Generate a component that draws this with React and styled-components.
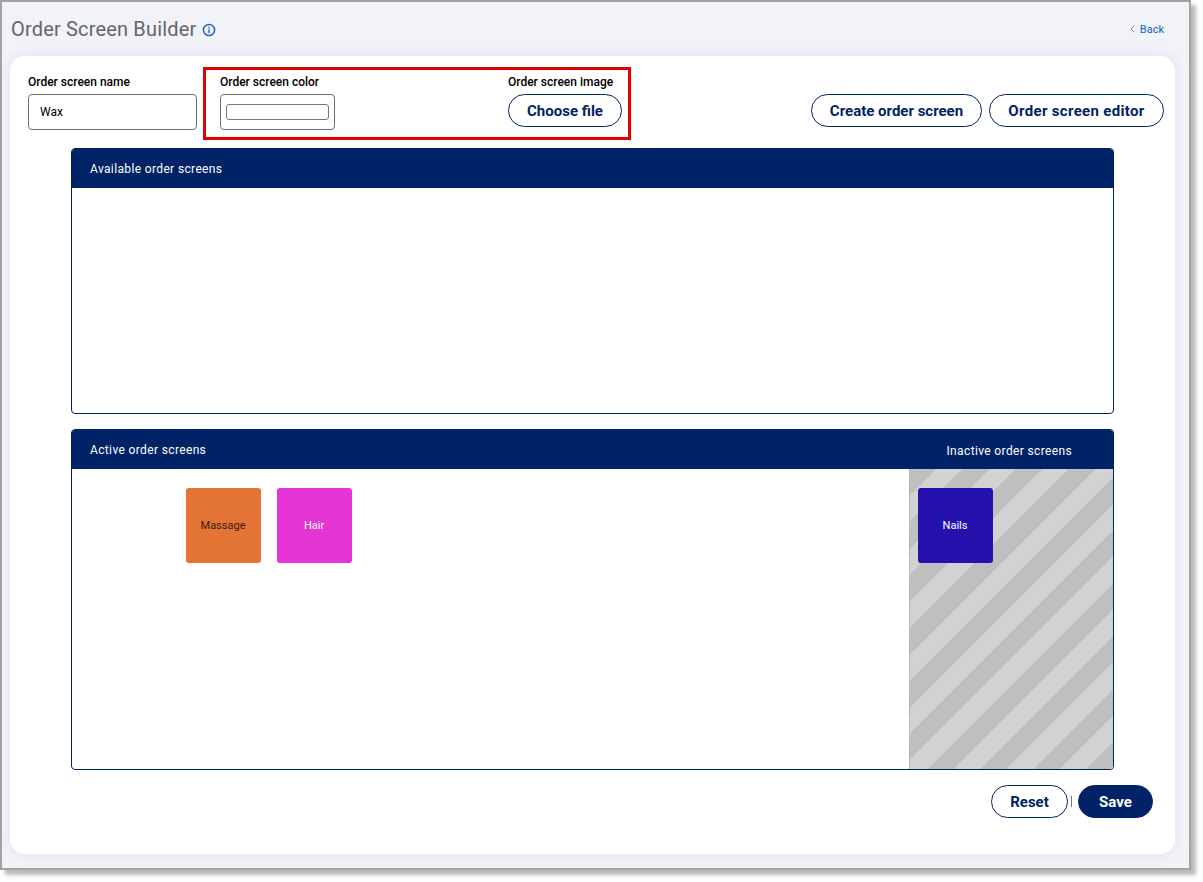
import React from "react";
import styled, { createGlobalStyle } from "styled-components";

const Global = createGlobalStyle`
  html, body { margin: 0; padding: 0; background: #fff; }
  body { font-family: Roboto, "Liberation Sans", sans-serif; color: #000; }
  #root { width: 1203px; height: 882px; overflow: hidden; }
  * { box-sizing: border-box; }
`;
const navy = "#002266";

const Frame = styled.div`
  width: 1191px;
  height: 870px;
  border: 2px solid #a3a3a3;
  background: #f1f3f8;
  box-shadow: 5px 5px 4px rgba(0,0,0,.28);
  padding: 0 14px 14px 8px;
  display: flex;
  flex-direction: column;
`;
const TopBar = styled.div`
  height: 54px;
  display: flex;
  align-items: center;
  padding: 0 11px 0 1px;
  flex: none;
`;
const Title = styled.h1`
  margin: 0;
  font-size: 20px;
  font-weight: 400;
  letter-spacing: .17px;
  color: #666;
`;
const InfoIcon = styled.svg`
  width: 14px;
  height: 14px;
  margin-left: 6px;
  margin-top: 1px;
`;
const BackLink = styled.a`
  margin-left: auto;
  display: flex;
  align-items: center;
  gap: 5px;
  font-size: 11px;
  color: #0a68c4;
`;
const Card = styled.main`
  flex: 1;
  background: #fff;
  border-radius: 15px;
  box-shadow: 0 0 14px rgba(60,70,110,.09);
  padding: 11px 11px 0 18px;
  display: flex;
  flex-direction: column;
`;
const FormRow = styled.div`
  display: flex;
  align-items: flex-start;
  height: 81px;
  flex: none;
`;
const Field = styled.div`
  display: flex;
  flex-direction: column;
  padding-top: 8px;
  width: ${p => p.$width}px;
`;
const Label = styled.label`
  font-size: 12px;
  font-weight: 500;
  line-height: 14px;
  height: 19px;
  white-space: nowrap;
`;
const TextBox = styled.div`
  height: 36px;
  border: 1px solid #6e6e6e;
  border-radius: 4px;
  padding: 0 11px;
  display: flex;
  align-items: center;
  font-size: 12px;
`;
const ColorBox = styled(TextBox)`
  padding: 0 5px;
`;
const Swatch = styled.div`
  width: 103px;
  height: 16px;
  border: 1px solid #777;
  border-radius: 3px;
  background: #fff;
`;
const Highlight = styled.div`
  width: 428px;
  height: 73px;
  margin-left: 6px;
  border: 3px solid #e00000;
  padding: 0 6px 0 14px;
  display: flex;
  justify-content: space-between;
`;
const HighlightField = styled(Field)`
  padding-top: 5px;
`;
const PillButton = styled.button`
  height: 33px;
  width: ${p => p.$width}px;
  border: 1px solid ${navy};
  border-radius: 17px;
  background: ${p => (p.$filled ? navy : "#fff")};
  color: ${p => (p.$filled ? "#fff" : navy)};
  font: 700 15px Roboto, sans-serif;
  letter-spacing: ${p => p.$spacing || 0}px;
  padding: 0;
  white-space: nowrap;
`;
const Actions = styled.div`
  margin-left: auto;
  display: flex;
  gap: 7px;
  padding-top: 27px;
`;
const Panel = styled.section`
  width: 1043px;
  height: ${p => p.$height}px;
  margin: ${p => p.$top}px 0 0 43px;
  border: 1px solid ${navy};
  border-radius: 4px;
  display: flex;
  flex-direction: column;
  overflow: hidden;
  flex: none;
`;
const PanelHeader = styled.header`
  height: 39px;
  flex: none;
  background: ${navy};
  color: #fff;
  font-size: 12px;
  font-weight: 400;
  letter-spacing: .36px;
  display: flex;
  align-items: center;
  padding: 0 41px 0 18px;
  justify-content: space-between;
`;
const InactiveTitle = styled.span`
  padding-top: 2px;
`;
const PanelBody = styled.div`
  flex: 1;
  display: flex;
  min-height: 0;
`;
const ActiveArea = styled.div`
  flex: 1;
  display: flex;
  gap: 16px;
  padding: 19px 0 0 114px;
  align-items: flex-start;
`;
const InactiveArea = styled.div`
  width: 204px;
  border-left: 1px dotted #aaa;
  padding: 19px 0 0 8px;
  background: repeating-linear-gradient(135deg, #bfbfbf 0 18.7px, #d2d2d2 18.7px 37.4px);
`;
const Tile = styled.div`
  width: 75px;
  height: 75px;
  border-radius: 3px;
  background: ${p => p.$bg};
  color: ${p => p.$fg};
  font-size: 11px;
  padding-right: 1px;
  display: flex;
  align-items: center;
  justify-content: center;
`;
const Footer = styled.div`
  display: flex;
  align-items: center;
  justify-content: flex-end;
  padding: 15px 0 0 0;
  margin-right: 11px;
`;
const Divider = styled.span`
  width: 1px;
  height: 11px;
  background: #777;
  margin: 0 6px 0 3px;
`;

export default function App() {
  return (
    <>
      <Global />
      <Frame>
        <TopBar>
          <Title>Order Screen Builder</Title>
          <InfoIcon viewBox="0 0 14 14" fill="none" stroke="#1a62c0">
            <circle cx="7" cy="7" r="5.6" strokeWidth="1.5" />
            <path d="M7 6.2v3.8M7 3.8v1.4" strokeWidth="1.4" />
          </InfoIcon>
          <BackLink>
            <svg width="5" height="8" viewBox="0 0 5 8" fill="none" stroke="#8a8f9c" strokeWidth="1">
              <path d="M4.3.7 1 4l3.3 3.3" />
            </svg>
            Back
          </BackLink>
        </TopBar>
        <Card>
          <FormRow>
            <Field $width={169}>
              <Label>Order screen name</Label>
              <TextBox>Wax</TextBox>
            </Field>
            <Highlight>
              <HighlightField $width={115}>
                <Label>Order screen color</Label>
                <ColorBox><Swatch /></ColorBox>
              </HighlightField>
              <HighlightField $width={114}>
                <Label>Order screen image</Label>
                <PillButton $width={114}>Choose file</PillButton>
              </HighlightField>
            </Highlight>
            <Actions>
              <PillButton $width={171}>Create order screen</PillButton>
              <PillButton $width={175} $spacing={0.33}>Order screen editor</PillButton>
            </Actions>
          </FormRow>
          <Panel $height={266} $top={0}>
            <PanelHeader>Available order screens</PanelHeader>
          </Panel>
          <Panel $height={341} $top={15}>
            <PanelHeader>
              <span>Active order screens</span>
              <InactiveTitle>Inactive order screens</InactiveTitle>
            </PanelHeader>
            <PanelBody>
              <ActiveArea>
                <Tile $bg="#e47336" $fg="#3a2010">Massage</Tile>
                <Tile $bg="#e535d4" $fg="#fff">Hair</Tile>
              </ActiveArea>
              <InactiveArea>
                <Tile $bg="#2511ad" $fg="#fff">Nails</Tile>
              </InactiveArea>
            </PanelBody>
          </Panel>
          <Footer>
            <PillButton $width={77}>Reset</PillButton>
            <Divider />
            <PillButton $width={75} $filled>Save</PillButton>
          </Footer>
        </Card>
      </Frame>
    </>
  );
}
